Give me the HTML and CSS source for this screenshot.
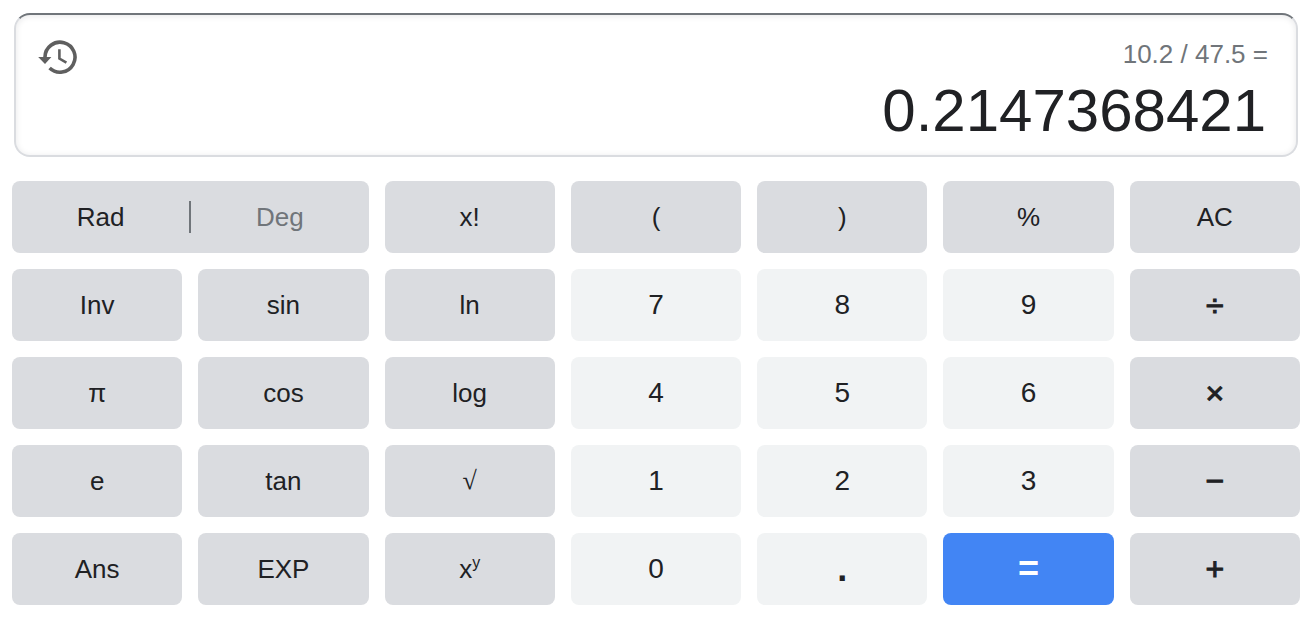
FILE: index.html
```html
<!DOCTYPE html>
<html lang="en">
<head>
  <meta charset="UTF-8">
  <meta name="viewport" content="width=device-width, initial-scale=1">
  <title>Calculator</title>
  <link rel="stylesheet" href="styles.css">
</head>
<body>
  <main class="calculator">
    <div class="display">
      <button type="button" class="history" aria-label="History">
        <svg width="40" height="36" viewBox="0 0 40 36" fill="none" stroke="currentColor">
          <path d="M8 19v-1a15 15 0 1 1 4.6 11" stroke-width="3.6"/>
          <path d="M1.2 18h13.2L8 25z" fill="currentColor" stroke="none"/>
          <path d="M22.4 10.3v9.3l7 4" stroke-width="2.6"/>
        </svg>
      </button>
      <div class="readout">
        <div class="expression">10.2 / 47.5 =</div>
        <output class="result">0.2147368421</output>
      </div>
    </div>

    <div class="keys">
      <div class="key angle" role="radiogroup" aria-label="Angle unit">
        <label><input type="radio" name="angle" value="rad" checked><span>Rad</span></label>
        <label><input type="radio" name="angle" value="deg"><span>Deg</span></label>
      </div>
      <button type="button" class="key">x!</button>
      <button type="button" class="key">(</button>
      <button type="button" class="key">)</button>
      <button type="button" class="key">%</button>
      <button type="button" class="key">AC</button>

      <button type="button" class="key">Inv</button>
      <button type="button" class="key">sin</button>
      <button type="button" class="key">ln</button>
      <button type="button" class="key number">7</button>
      <button type="button" class="key number">8</button>
      <button type="button" class="key number">9</button>
      <button type="button" class="key operator">÷</button>

      <button type="button" class="key">π</button>
      <button type="button" class="key">cos</button>
      <button type="button" class="key">log</button>
      <button type="button" class="key number">4</button>
      <button type="button" class="key number">5</button>
      <button type="button" class="key number">6</button>
      <button type="button" class="key operator">×</button>

      <button type="button" class="key">e</button>
      <button type="button" class="key">tan</button>
      <button type="button" class="key root">√</button>
      <button type="button" class="key number">1</button>
      <button type="button" class="key number">2</button>
      <button type="button" class="key number">3</button>
      <button type="button" class="key operator">−</button>

      <button type="button" class="key">Ans</button>
      <button type="button" class="key">EXP</button>
      <button type="button" class="key">x<sup>y</sup></button>
      <button type="button" class="key number">0</button>
      <button type="button" class="key number point">.</button>
      <button type="button" class="key equals">=</button>
      <button type="button" class="key operator">+</button>
    </div>
  </main>
</body>
</html>
```
FILE: styles.css
```css
:root {
  --text: #202124;
  --muted: #70757a;
  --key: #dadce0;
  --number: #f1f3f4;
  --blue: #4285f4;
}
* {
  box-sizing: border-box;
}
body {
  margin: 0;
  background: #fff;
  color: var(--text);
  font-family: "Liberation Sans", Arial, sans-serif;
}
.calculator {
  padding: 13px 3px 16px 12px;
}

/* display */
.display {
  display: flex;
  justify-content: space-between;
  align-items: flex-start;
  margin: 0 2px 24px;
  padding: 24px 28px 8px 21px;
  border: 2px solid var(--key);
  border-top-color: var(--muted);
  border-radius: 16px;
  box-shadow: inset 0 1px 6px rgba(32, 33, 36, 0.1);
}
.history {
  display: flex;
  padding: 0;
  border: 0;
  background: none;
  color: #5f5f5f;
  cursor: pointer;
}
.readout {
  display: flex;
  flex-direction: column;
  align-items: flex-end;
  gap: 6px;
}
.expression {
  color: var(--muted);
  font-size: 26px;
  line-height: 30px;
}
.result {
  padding-right: 2px;
  font-size: 60px;
  line-height: 72px;
}

/* keys */
.keys {
  display: grid;
  grid-template-columns: repeat(7, 1fr);
  grid-auto-rows: 72px;
  gap: 16px;
}
.key {
  padding: 0;
  border: 0;
  border-radius: 8px;
  background: var(--key);
  color: var(--text);
  font-family: inherit;
  font-size: 26px;
  line-height: 32px;
  cursor: pointer;
}
.key sup {
  font-size: 16px;
  line-height: 0;
}
.root {
  font-family: "Liberation Serif", "Times New Roman", serif;
}
.number {
  background: var(--number);
  font-size: 28px;
}
.operator {
  font-size: 32px;
  -webkit-text-stroke: 1px currentColor;
}
.point,
.equals {
  font-size: 36px;
  font-weight: bold;
}
.equals {
  background: var(--blue);
  color: #fff;
}

/* Rad / Deg switch */
.angle {
  grid-column: span 2;
  display: flex;
  align-items: center;
}
.angle label {
  flex: 1;
  color: var(--muted);
  text-align: center;
  cursor: pointer;
}
.angle label:first-child {
  border-right: 2px solid var(--muted);
}
.angle input {
  appearance: none;
  position: absolute;
  margin: 0;
}
.angle input:checked + span {
  color: var(--text);
}
```
